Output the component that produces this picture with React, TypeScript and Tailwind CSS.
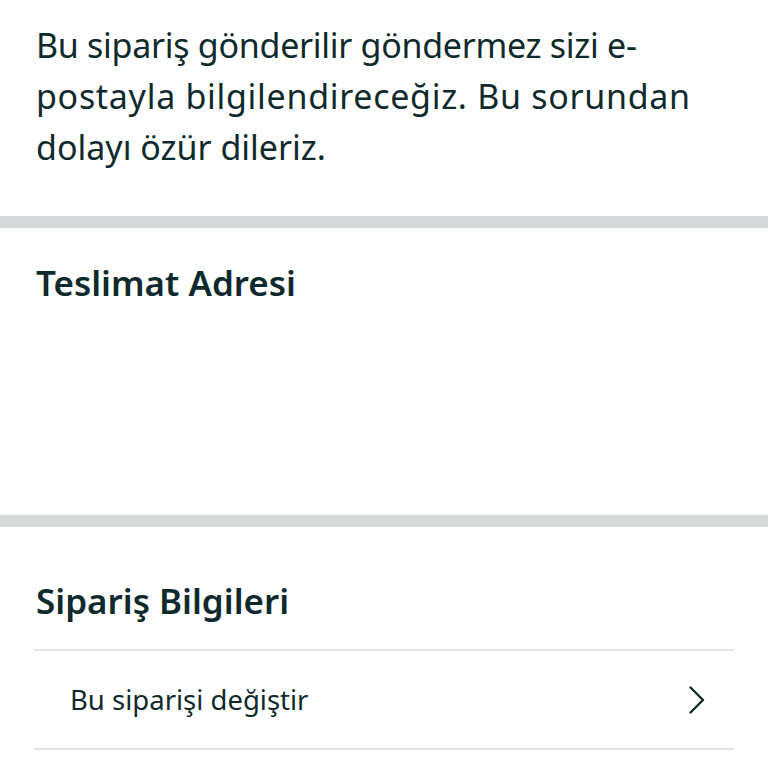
import React from "react";

const ink = "text-[#0f2a2c]";

function Chevron() {
  return (
    <svg width="18" height="30" viewBox="0 0 18 30" fill="none" aria-hidden="true">
      <polyline
        points="2.5,2.5 15,15 2.5,27.5"
        stroke="#0f2a2c"
        strokeWidth="2.4"
        strokeLinecap="round"
        strokeLinejoin="round"
      />
    </svg>
  );
}

export default function App() {
  return (
    <div
      className={`w-[768px] min-h-[768px] bg-white ${ink}`}
      style={{ fontFamily: '"Noto Sans", Roboto, sans-serif' }}
    >
      {/* notice */}
      <section className="px-[36px] pt-[20px] pb-[43px]">
        <p className="text-[34px] leading-[51px]">
          <span className="block tracking-[-0.28px]">Bu sipariş gönderilir göndermez sizi e-</span>
          <span className="block tracking-[0.7px]">postayla bilgilendireceğiz. Bu sorundan</span>
          <span className="block">dolayı özür dileriz.</span>
        </p>
      </section>

      <div className="h-[12px] bg-[#d5d9d9]" />

      {/* shipping address */}
      <section className="px-[36px] pt-[35px] h-[287px]">
        <h2 className="text-[35px] leading-[40px] font-semibold">Teslimat Adresi</h2>
      </section>

      <div className="h-[12px] bg-[#d5d9d9]" />

      {/* order info */}
      <section className="pt-[54px]">
        <h2 className="px-[36px] text-[35px] leading-[40px] font-semibold">Sipariş Bilgileri</h2>
        <div className="mx-[34px] mt-[28px] border-t-2 border-b-2 border-[#e3e6e6]">
          <div className="h-[97px] flex items-center justify-between pl-[36px] pr-[28px]">
            <span className="text-[27.5px]">Bu siparişi değiştir</span>
            <Chevron />
          </div>
        </div>
      </section>
    </div>
  );
}
